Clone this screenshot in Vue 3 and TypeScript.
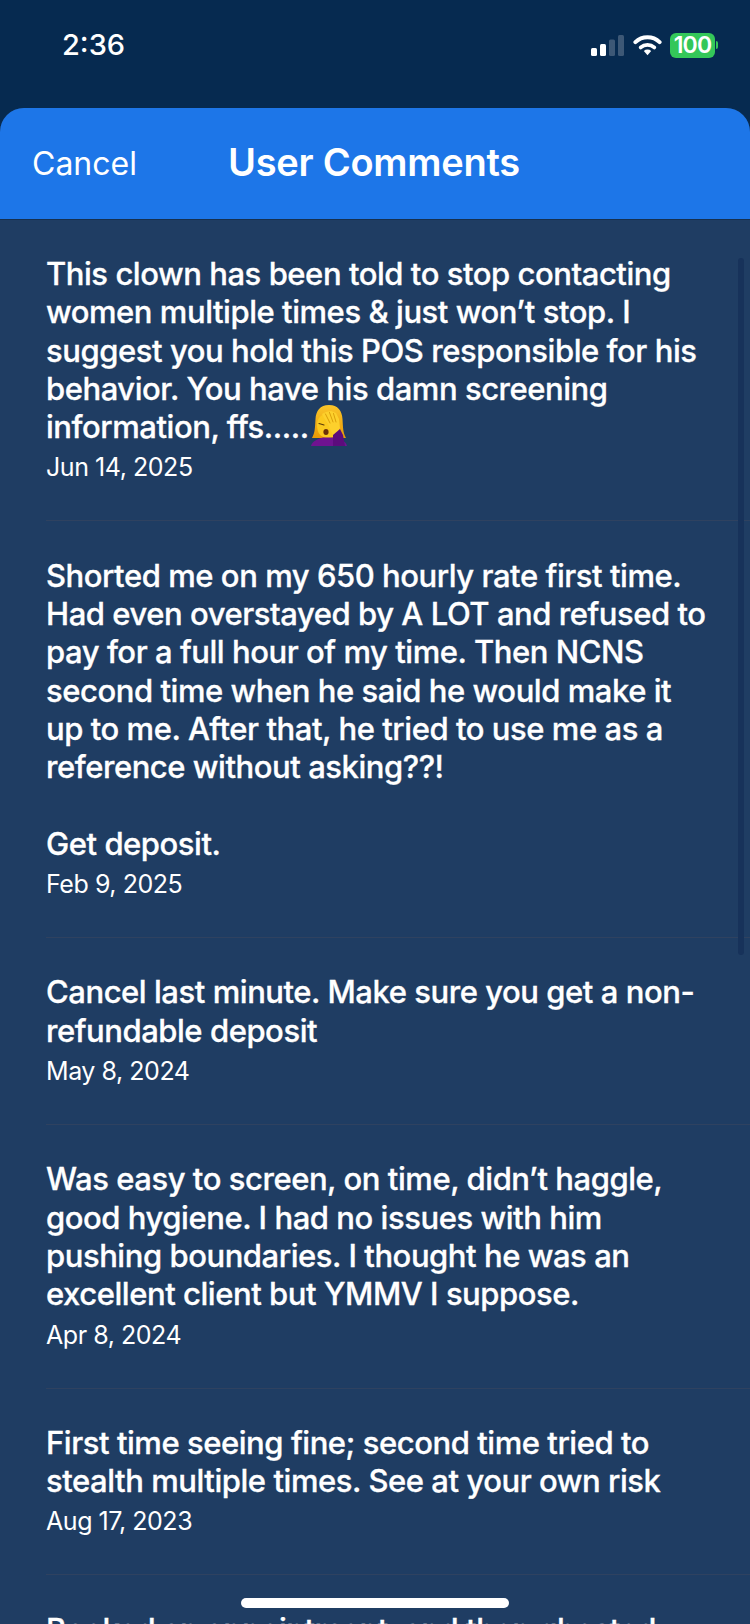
<script setup lang="ts">
interface Comment {
  lines: string[];
  date: string;
  emoji?: boolean;
}

const comments: Comment[] = [
  {
    lines: [
      'This clown has been told to stop contacting',
      'women multiple times & just won’t stop. I',
      'suggest you hold this POS responsible for his',
      'behavior. You have his damn screening',
      'information, ffs.....',
    ],
    date: 'Jun 14, 2025',
    emoji: true,
  },
  {
    lines: [
      'Shorted me on my 650 hourly rate first time.',
      'Had even overstayed by A LOT and refused to',
      'pay for a full hour of my time. Then NCNS',
      'second time when he said he would make it',
      'up to me. After that, he tried to use me as a',
      'reference without asking??!',
      '\u00a0',
      'Get deposit.',
    ],
    date: 'Feb 9, 2025',
  },
  {
    lines: ['Cancel last minute. Make sure you get a non-', 'refundable deposit'],
    date: 'May 8, 2024',
  },
  {
    lines: [
      'Was easy to screen, on time, didn’t haggle,',
      'good hygiene. I had no issues with him',
      'pushing boundaries. I thought he was an',
      'excellent client but YMMV I suppose.',
    ],
    date: 'Apr 8, 2024',
  },
  {
    lines: ['First time seeing fine; second time tried to', 'stealth multiple times. See at your own risk'],
    date: 'Aug 17, 2023',
  },
  {
    lines: ['Booked an appointment, and then ghosted'],
    date: '',
  },
];
</script>

<template>
  <div class="screen">
    <div class="status">
      <span class="time">2:36</span>
      <div class="indicators">
        <svg class="signal" width="34" height="21" viewBox="0 0 34 21">
          <rect x="0" y="13" width="6" height="8" rx="1.5" fill="#fff" />
          <rect x="9" y="9" width="6" height="12" rx="1.5" fill="#fff" />
          <rect x="18" y="4.5" width="6" height="16.5" rx="1.5" fill="#3d5876" />
          <rect x="27" y="0" width="6" height="21" rx="1.5" fill="#3d5876" />
        </svg>
        <svg class="wifi" width="29" height="22" viewBox="0 0 30 22">
          <path d="M2.5 8 A18 18 0 0 1 27.5 8" fill="none" stroke="#fff" stroke-width="4.2" stroke-linecap="round" />
          <path d="M8 13.5 A10.5 10.5 0 0 1 22 13.5" fill="none" stroke="#fff" stroke-width="4" stroke-linecap="round" />
          <path d="M11.2 17.2 L15 21.5 L18.8 17.2 A5.5 5.5 0 0 0 11.2 17.2 Z" fill="#fff" />
        </svg>
        <div class="battery">
          <span class="level">100</span>
          <span class="cap"></span>
        </div>
      </div>
    </div>

    <div class="sheet">
      <header class="bar">
        <span class="cancel">Cancel</span>
        <h1 class="title">User Comments</h1>
      </header>

      <div class="list">
        <article v-for="(c, i) in comments" :key="i" class="item">
          <p class="text">
            <span v-for="(line, j) in c.lines" :key="j" class="line">{{ line }}<svg
                v-if="c.emoji && j === c.lines.length - 1"
                class="emoji"
                width="40"
                height="44"
                viewBox="0 0 40 42"
              >
                <defs>
                  <linearGradient id="hair" x1="0" y1="0" x2="0" y2="1">
                    <stop offset="0" stop-color="#fbc62a" />
                    <stop offset="1" stop-color="#e89a06" />
                  </linearGradient>
                </defs>
                <path d="M20 1 C11 1 7 7 6.5 15 C6 23 6 29 3 34 L37 34 C34 29 34 23 33.5 15 C33 7 29 1 20 1 Z" fill="url(#hair)" />
                <path d="M8 21 C8 13 13 10 20 10 C27 10 30 14 30 21 C30 29 26 34 19 34 C12 34 8 29 8 21 Z" fill="#fbc91f" />
                <path d="M2 42 C3 37 9 35 14 33.5 L25 33.5 C31 35 37 37 38 42 Z" fill="#6f1390" />
                <path d="M13 10 L17 8 L22 7 L27 9 L30 15 L31 24 L28 30 L24 31 L21 25 L19 20 L15 14 Z" fill="#fdd02c" />
                <path d="M16.5 10 L21 19 M20.5 8.5 L24 18 M24.5 9.5 L27 18" stroke="#d79a08" stroke-width="0.9" fill="none" stroke-linecap="round" />
                <path d="M10 19.5 L15 21" stroke="#5a3a0a" stroke-width="1.1" fill="none" stroke-linecap="round" />
                <ellipse cx="17" cy="28" rx="2.6" ry="3" fill="#6b3208" />
                <path d="M24 31 L31 25 L34 31 L36 42 L24 42 Z" fill="#5c0c7c" />
              </svg></span>
          </p>
          <time v-if="c.date" class="date">{{ c.date }}</time>
        </article>
      </div>
    </div>

    <div class="scrollbar"></div>
    <div class="home"></div>
  </div>
</template>

<style>
html,
body {
  margin: 0;
  background: #062a50;
}
</style>

<style scoped>
.screen {
  position: relative;
  width: 750px;
  height: 1624px;
  overflow: hidden;
  background: #062a50;
  color: #fff;
  font-family: Inter, "Liberation Sans", sans-serif;
}

.status {
  height: 108px;
  box-sizing: border-box;
  padding: 27px 32px 0 62px;
  display: flex;
  justify-content: space-between;
  align-items: flex-start;
}

.time {
  font-size: 29px;
  line-height: 36px;
  font-weight: 500;
}

.indicators {
  display: flex;
  align-items: center;
  gap: 8px;
  height: 36px;
}

.battery {
  display: flex;
  align-items: center;
  gap: 1px;
}

.level {
  width: 45px;
  height: 25px;
  border-radius: 6px;
  background: #34c759;
  font-size: 23px;
  line-height: 25px;
  font-weight: 600;
  text-align: center;
  letter-spacing: -0.8px;
}

.cap {
  width: 2px;
  height: 8px;
  border-radius: 0 2px 2px 0;
  background: #34c759;
}

.sheet {
  height: 1516px;
  border-radius: 24px 24px 0 0;
  overflow: hidden;
  background: #1f3d63;
}

.bar {
  height: 112px;
  box-sizing: border-box;
  background: #1d76e8;
  border-bottom: 1px solid #16304f;
  display: flex;
  align-items: center;
  padding-left: 32px;
}

.cancel {
  font-size: 32px;
  font-weight: 400;
  width: 196px;
}

.title {
  margin: 0 0 4px;
  font-size: 38px;
  font-weight: 600;
  letter-spacing: -0.25px;
}

.list {
  padding-top: 35px;
}

.item {
  margin-left: 46px;
  border-bottom: 1px solid #2f4260;
  padding-bottom: 38px;
  margin-bottom: 35.3px;
  display: flex;
  flex-direction: column;
}

.text {
  margin: 0;
  font-size: 31px;
  line-height: 38.3px;
  font-weight: 500;
  letter-spacing: -0.45px;
  -webkit-text-stroke: 0.3px #fff;
}

.line {
  display: block;
  white-space: nowrap;
  height: 38.3px;
}

.emoji {
  margin: -10px 0;
  vertical-align: 1px;
}

.date {
  margin-top: 6px;
  font-size: 25px;
  line-height: 30px;
  font-weight: 400;
  letter-spacing: -0.45px;
}

.scrollbar {
  position: absolute;
  left: 738px;
  top: 258px;
  width: 6px;
  height: 697px;
  border-radius: 3px;
  background: #17325a;
}

.home {
  position: absolute;
  left: 241px;
  top: 1598px;
  width: 268px;
  height: 10px;
  border-radius: 5px;
  background: #fff;
}
</style>
